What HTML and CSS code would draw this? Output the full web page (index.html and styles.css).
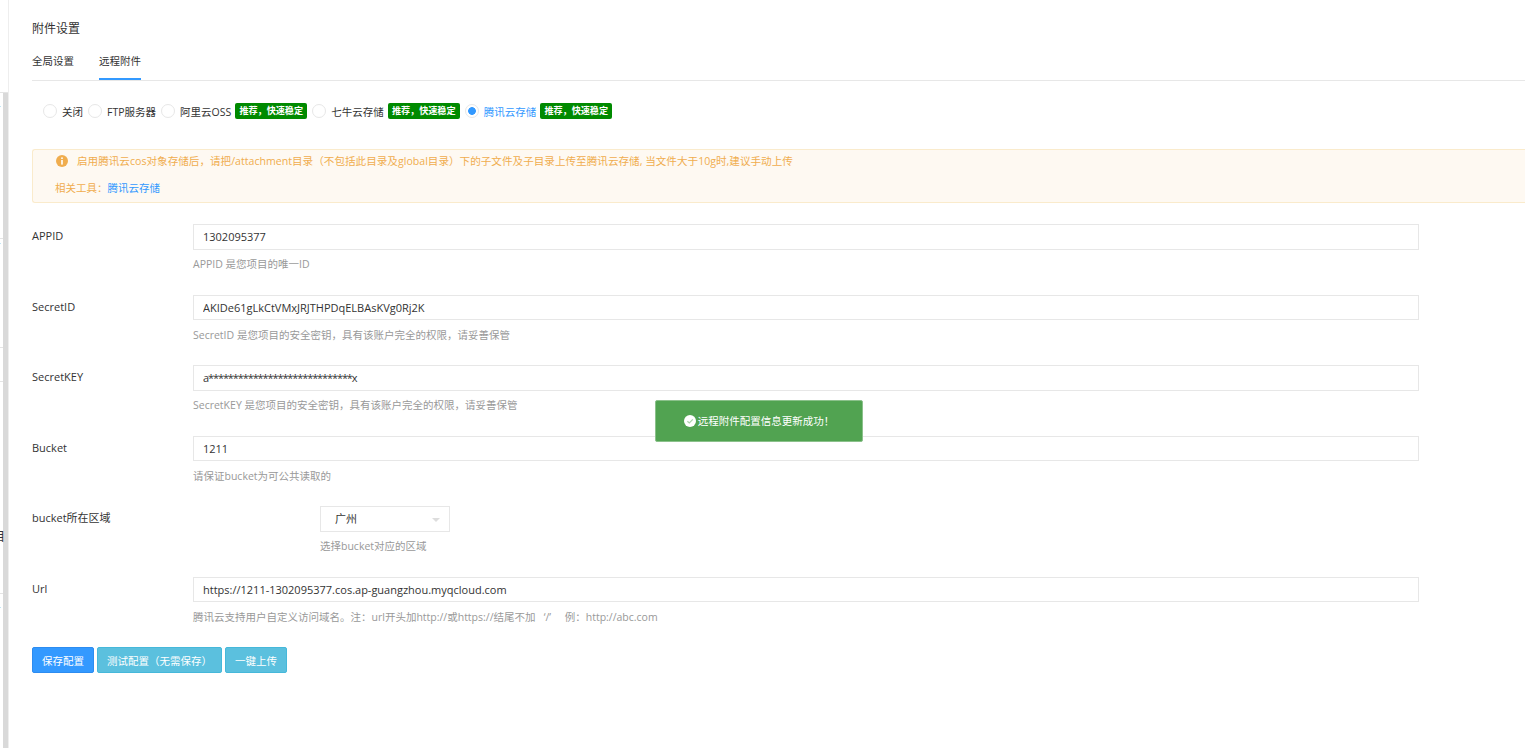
FILE: index.html
```html
<!DOCTYPE html>
<html>
  <head>
    <meta charset="utf-8">
    <link rel="stylesheet" href="styles.css">
  </head>
  <body>
    <div class="side">
      <div class="side-thumb"></div>
      <div class="side-cut">目</div>
    </div>
    <div class="main">
      <h4 class="title">附件设置</h4>
      <div class="tabs">
        <span class="tab">全局设置</span>
        <span class="tab tab-on">远程附件</span>
      </div>
      <div class="radios">
        <span class="radio"></span><span class="radio-text">关闭</span>
        <span class="radio"></span><span class="radio-text">FTP服务器</span>
        <span class="radio"></span><span class="radio-text">阿里云OSS</span><span class="tag">推荐，快速稳定</span>
        <span class="radio"></span><span class="radio-text">七牛云存储</span><span class="tag">推荐，快速稳定</span>
        <span class="radio radio-on"></span><span class="radio-text text-on">腾讯云存储</span><span class="tag">推荐，快速稳定</span>
      </div>
      <div class="notice">
        <div class="notice-line">
          <svg class="notice-icon" viewBox="0 0 12 12"><circle cx="6" cy="6" r="6" fill="#f0ad4e"/><rect x="5.2" y="2.4" width="1.6" height="1.6" fill="#fff"/><rect x="5.2" y="5" width="1.6" height="4.6" fill="#fff"/></svg>
          启用腾讯云cos对象存储后，请把/attachment目录（不包括此目录及global目录）下的子文件及子目录上传至腾讯云存储, 当文件大于10g时,建议手动上传
        </div>
        <div class="notice-tool">相关工具：<a class="link">腾讯云存储</a></div>
      </div>
      <div class="row">
        <label class="row-label">APPID</label>
        <div class="row-body">
          <input class="input" type="text" value="1302095377">
          <div class="help">APPID 是您项目的唯一ID</div>
        </div>
      </div>
      <div class="row">
        <label class="row-label">SecretID</label>
        <div class="row-body">
          <input class="input" type="text" value="AKIDe61gLkCtVMxJRJTHPDqELBAsKVg0Rj2K">
          <div class="help">SecretID 是您项目的安全密钥，具有该账户完全的权限，请妥善保管</div>
        </div>
      </div>
      <div class="row">
        <label class="row-label">SecretKEY</label>
        <div class="row-body">
          <input class="input input-masked" type="text" value="a*****************************x">
          <div class="help">SecretKEY 是您项目的安全密钥，具有该账户完全的权限，请妥善保管</div>
        </div>
      </div>
      <div class="row">
        <label class="row-label">Bucket</label>
        <div class="row-body">
          <input class="input" type="text" value="1211">
          <div class="help">请保证bucket为可公共读取的</div>
        </div>
      </div>
      <div class="row">
        <label class="row-label">bucket所在区域</label>
        <div class="row-body row-region">
          <div class="select">广州<span class="select-arrow"></span></div>
          <div class="help">选择bucket对应的区域</div>
        </div>
      </div>
      <div class="row">
        <label class="row-label">Url</label>
        <div class="row-body">
          <input class="input" type="text" value="https://1211-1302095377.cos.ap-guangzhou.myqcloud.com">
          <div class="help">腾讯云支持用户自定义访问域名。注：url开头加http://或https://结尾不加 &nbsp;&nbsp;‘/’ &nbsp;&nbsp;&nbsp;&nbsp;例：http://abc.com</div>
        </div>
      </div>
      <div class="actions">
        <button class="btn btn-primary">保存配置</button>
        <button class="btn btn-info">测试配置（无需保存）</button>
        <button class="btn btn-info">一键上传</button>
      </div>
    </div>
    <div class="toast">
      <svg class="toast-icon" viewBox="0 0 12 12"><circle cx="6" cy="6" r="6" fill="#fff"/><path d="M3.4 6.2 5.3 8 8.8 4.3" fill="none" stroke="#a9d2a9" stroke-width="1.2"/></svg>远程附件配置信息更新成功！
    </div>
  </body>
</html>
```

FILE: styles.css
```css
* {
  box-sizing: border-box;
}

html,
body {
  margin: 0;
  height: 100%;
  overflow: hidden;
}

body {
  display: flex;
  background: #fff;
  color: #333;
  font-family: "Open Sans", "Noto Sans CJK SC", sans-serif;
  font-size: 10.5px;
}

/* sliver of the neighbouring pane: row lines and scrollbar */
.side {
  position: relative;
  width: 9px;
  flex-shrink: 0;
  border-right: 1px solid #eee;
  overflow: hidden;
  background:
    linear-gradient(#e4e4e4, #e4e4e4) 0 92px / 8px 1px no-repeat,
    linear-gradient(#e4e4e4, #e4e4e4) 0 238px / 8px 1px no-repeat,
    linear-gradient(#e4e4e4, #e4e4e4) 0 347px / 8px 1px no-repeat,
    linear-gradient(#e4e4e4, #e4e4e4) 0 381px / 8px 1px no-repeat,
    linear-gradient(#e4e4e4, #e4e4e4) 0 593px / 8px 1px no-repeat,
    linear-gradient(#bfe6f5, #bfe6f5) 0 106px / 1px 1px no-repeat,
    linear-gradient(#bfe6f5, #bfe6f5) 0 243px / 1px 1px no-repeat,
    linear-gradient(#bfe6f5, #bfe6f5) 0 607px / 1px 1px no-repeat;
}

.side-thumb {
  position: absolute;
  top: 93px;
  bottom: 0;
  left: 3px;
  width: 5px;
  background: #d9d9d9;
}

.side-cut {
  position: absolute;
  top: 529px;
  left: -7px;
  font-size: 12px;
  line-height: 16px;
}

.main {
  flex: 1;
  min-width: 0;
  padding: 20px 0 0 23px;
}

.title {
  margin: 0;
  font-size: 12px;
  font-weight: 400;
  line-height: 18px;
}

.tabs {
  display: flex;
  gap: 25px;
  height: 43px;
  padding-top: 14px;
  border-bottom: 1px solid #e7e7e7;
}

.tab {
  height: 28px;
  line-height: 18px;
}

.tab-on {
  border-bottom: 2px solid #39f;
}

.radios {
  display: flex;
  align-items: center;
  height: 22px;
  margin-top: 19px;
  padding-left: 10px;
}

.radio {
  width: 14px;
  height: 14px;
  margin: 0 5px 0 1px;
  border: 1px solid #e7e7e7;
  border-radius: 50%;
  background: #fff;
}

.radio-on {
  background: radial-gradient(circle, #39f 0, #39f 3.5px, #fff 4.2px);
}

.radio-text {
  margin-right: 4px;
}

.text-on {
  color: #39f;
}

.tag {
  width: 72px;
  height: 16px;
  margin-right: 4px;
  border-radius: 2px;
  background: #008a00;
  color: #fff;
  font-size: 9.1px;
  font-weight: 700;
  line-height: 16px;
  text-align: center;
  white-space: nowrap;
}

.notice {
  height: 54px;
  margin-top: 27px;
  padding: 3px 0 0 23px;
  border: 1px solid #faebcc;
  border-right: 0;
  border-radius: 3px 0 0 3px;
  background: #fef9f2;
  color: #f0ad4e;
}

.notice-line {
  display: flex;
  align-items: center;
  font-size: 10.6px;
  line-height: 16px;
}

.notice-icon {
  width: 12px;
  height: 12px;
  margin-right: 9px;
}

.notice-tool {
  margin: 11px 0 0 -1px;
  line-height: 16px;
}

.link {
  color: #39f;
}

.row {
  display: flex;
  height: 70.5px;
}

.notice + .row {
  margin-top: 21px;
}

.row-label {
  width: 161px;
  flex-shrink: 0;
  padding-top: 4px;
  font-size: 11px;
  line-height: 16px;
}

.row-body {
  width: 1226px;
}

.row-region {
  padding-left: 127px;
}

.input {
  display: block;
  width: 100%;
  height: 25.5px;
  padding: 0 9px;
  border: 1px solid #e7e7e7;
  color: #333;
  font: inherit;
  font-size: 11px;
  outline: none;
}

.input-masked {
  letter-spacing: -1.1px;
}

.help {
  margin-top: 6.5px;
  color: #999;
  line-height: 16px;
}

.select {
  position: relative;
  width: 130px;
  height: 25.5px;
  padding-left: 14px;
  border: 1px solid #e7e7e7;
  font-size: 11px;
  line-height: 23px;
}

.select-arrow {
  position: absolute;
  top: 11px;
  right: 9px;
  border: 4px solid transparent;
  border-top: 4px solid #ddd;
  border-bottom: 0;
}

.actions {
  display: flex;
  gap: 3px;
}

.btn {
  height: 26px;
  padding: 0 9px;
  border: 1px solid transparent;
  border-radius: 2px;
  color: #fff;
  font: inherit;
}

.btn-primary {
  background: #39f;
  border-color: #2d8cf0;
}

.btn-info {
  background: #5bc0de;
  border-color: #46b8da;
}

.toast {
  position: absolute;
  top: 400px;
  left: 655px;
  display: flex;
  align-items: center;
  justify-content: center;
  gap: 2px;
  width: 208px;
  height: 41.5px;
  border: 1px solid #8bc18b;
  border-radius: 2px;
  background: #51a351;
  color: #fff;
}

.toast-icon {
  width: 12px;
  height: 12px;
}
```
